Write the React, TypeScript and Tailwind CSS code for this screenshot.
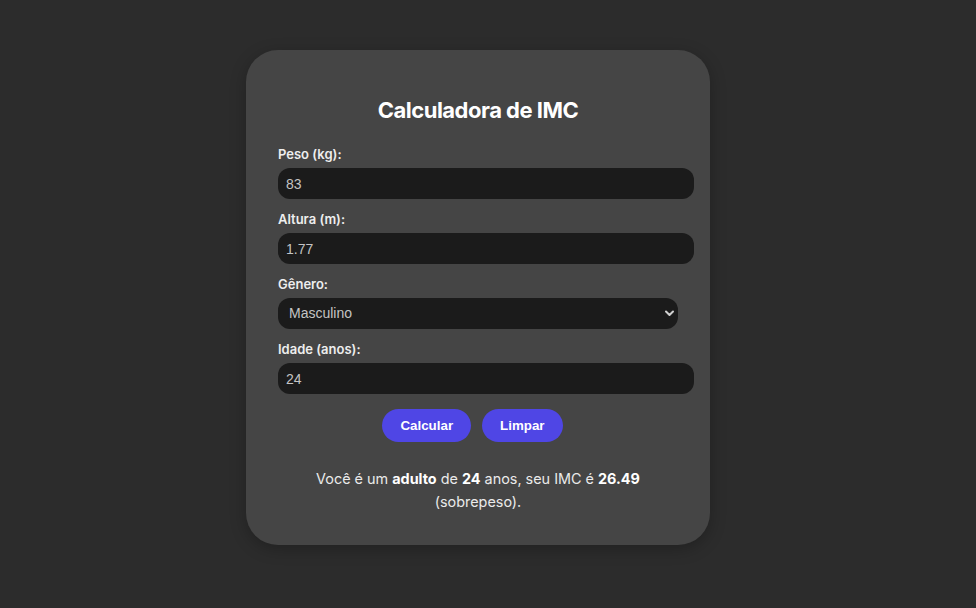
import React, { useState } from 'react';

const inputCls =
  'block h-[31px] w-[416px] rounded-xl bg-[#1b1b1b] px-2 text-[14px] text-[#c4c4c4] outline-none';

const labelCls = 'mb-[3px] block text-[13px] font-semibold leading-[21px] text-[#eeeeee]';

const buttonCls =
  'mr-[11px] h-[33px] rounded-full bg-[#4f46e5] px-[18px] text-[13.33px] font-bold text-white';

function Field({ label, value, onChange }: { label: string; value: string; onChange: (v: string) => void }) {
  return (
    <div className="mt-[10px]">
      <label className={labelCls}>{label}</label>
      <input
        className={inputCls}
        style={{ fontFamily: '"Liberation Sans", Arial, sans-serif' }}
        value={value}
        onChange={(e) => onChange(e.target.value)}
      />
    </div>
  );
}

export default function App() {
  const [peso, setPeso] = useState('83');
  const [altura, setAltura] = useState('1.77');
  const [idade, setIdade] = useState('24');
  const [genero, setGenero] = useState('Masculino');

  return (
    <div
      className="flex min-h-[608px] w-full justify-center bg-[#2c2c2c] pr-[20px] pt-[50px]"
      style={{ fontFamily: 'Inter, "Noto Sans", sans-serif' }}
    >
      <div className="h-[495px] w-[464px] rounded-[32px] bg-[#454545] px-8 pt-8 shadow-[0_4px_16px_rgba(0,0,0,0.25)]">
        <h2 className="mt-[14px] text-center text-[22px] font-bold leading-[28px] tracking-[-0.5px] text-white">
          Calculadora de IMC
        </h2>
        <div className="mt-[20px]">
          <Field label="Peso (kg):" value={peso} onChange={setPeso} />
          <Field label="Altura (m):" value={altura} onChange={setAltura} />
          <div className="mt-[10px]">
            <label className={labelCls}>Gênero:</label>
            <div className="relative w-[400px]">
              <select
                className="block h-[31px] w-[400px] appearance-none rounded-xl bg-[#1b1b1b] pl-[11px] text-[14px] text-[#c4c4c4] outline-none"
                style={{ fontFamily: '"Liberation Sans", Arial, sans-serif' }}
                value={genero}
                onChange={(e) => setGenero(e.target.value)}
              >
                <option>Masculino</option>
                <option>Feminino</option>
              </select>
              <svg
                className="pointer-events-none absolute right-[4px] top-[12px]"
                width="9"
                height="7"
                viewBox="0 0 9 7"
                fill="none"
              >
                <path d="M1 1.5 L4.5 5 L8 1.5" stroke="#d0d0d0" strokeWidth="2" strokeLinecap="round" strokeLinejoin="round" />
              </svg>
            </div>
          </div>
          <Field label="Idade (anos):" value={idade} onChange={setIdade} />
        </div>
        <div
          className="mt-[15px] flex justify-center"
          style={{ fontFamily: '"Liberation Sans", Arial, sans-serif' }}
        >
          <button className={buttonCls}>Calcular</button>
          <button className={buttonCls}>Limpar</button>
        </div>
        <p className="mt-[25px] text-center text-[14.4px] leading-[23px] text-[#eaeaea]">
          Você é um <strong className="font-bold text-white">adulto</strong> de{' '}
          <strong className="font-bold text-white">24</strong> anos, seu IMC é{' '}
          <strong className="font-bold text-white">26.49</strong> (sobrepeso).
        </p>
      </div>
    </div>
  );
}
